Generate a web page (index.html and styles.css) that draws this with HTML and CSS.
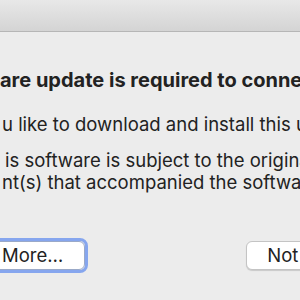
FILE: index.html
```html
<!DOCTYPE html>
<html>
<head>
<meta charset="utf-8">
<link rel="stylesheet" href="styles.css">
</head>
<body>
<div class="window">
  <div class="titlebar"></div>
  <div class="content">
    <p class="heading">are update is required to connect to your Mac</p>
    <p class="line line-q">u like to download and install this update now?</p>
    <p class="line line-l1">is software is subject to the original license</p>
    <p class="line line-l2">nt(s) that accompanied the software being updated.</p>
    <div class="buttons">
      <div class="btn-focus"><div class="btn btn-more">More…</div></div>
      <div class="btn btn-not">Not Now</div>
    </div>
  </div>
</div>
</body>
</html>
```
FILE: styles.css
```css
html, body {
  margin: 0;
  padding: 0;
  width: 300px;
  height: 300px;
  overflow: hidden;
  background: #ececec;
}
.window {
  width: 300px;
  height: 300px;
  overflow: hidden;
  font-family: Inter, "Liberation Sans", sans-serif;
  color: #222;
}
.titlebar {
  height: 31px;
  background: linear-gradient(#e8e8e8, #d4d4d4);
  border-bottom: 1px solid #b6b6b6;
}
.content {
  white-space: nowrap;
}
.heading {
  margin: 36px 0 0 0;
  font-size: 20px;
  font-weight: 700;
  line-height: 24px;
}
.line {
  margin: 0;
  font-size: 18.5px;
  line-height: 22px;
}
.line-q { margin-top: 21px; padding-left: 2px; }
.line-l1 { margin-top: 14px; padding-left: 5px; }
.line-l2 { padding-left: 2px; }
.buttons {
  display: flex;
  align-items: center;
  gap: 158px;
  margin-top: 45px;
}
.btn-focus {
  flex: none;
  margin-left: -30px;
  border: 3px solid #86a6ee;
  border-radius: 8px;
}
.btn {
  flex: none;
  background: #fff;
  font-size: 18.5px;
  line-height: 27px;
  border-radius: 6px;
}
.btn-more {
  padding: 0 21px 0 28px;
  border: 1px solid #9aa9c8;
}
.btn-not {
  padding: 0 20px;
  border: 1px solid #c4c4c4;
  box-shadow: 0 1px 1px rgba(0,0,0,0.15);
}
```
